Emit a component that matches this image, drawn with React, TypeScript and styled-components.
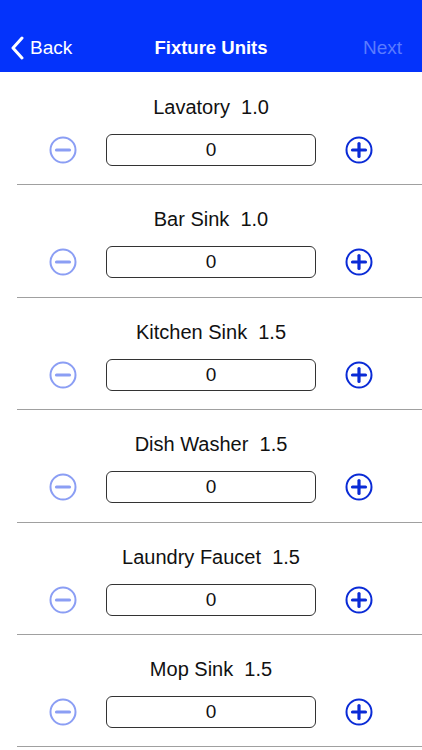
import React, { useState } from "react";
import styled, { createGlobalStyle } from "styled-components";

const GlobalStyle = createGlobalStyle`
  html, body {
    margin: 0;
    padding: 0;
    background: #ffffff;
    font-family: "Liberation Sans", Arial, sans-serif;
  }
`;

const Page = styled.div`
  width: 422px;
  height: 750px;
  overflow: hidden;
  background: #ffffff;
`;

const NavBar = styled.div`
  height: 72px;
  box-sizing: border-box;
  padding-top: 24px;
  background: #0433fb;
  display: grid;
  grid-template-columns: 1fr auto 1fr;
  align-items: center;
  color: #ffffff;
`;

const BackButton = styled.div`
  display: flex;
  align-items: center;
  gap: 6px;
  padding-left: 10px;
  font-size: 19px;
  height: 48px;
`;

const Title = styled.div`
  font-size: 18.5px;
  font-weight: bold;
`;

const NextButton = styled.div`
  justify-self: end;
  padding-right: 20px;
  font-size: 19px;
  color: #5a7bff;
`;

const List = styled.div`
  display: flex;
  flex-direction: column;
`;

const Row = styled.div`
  position: relative;
  height: 112.4px;
  box-sizing: border-box;
  padding-top: 24px;
  display: flex;
  flex-direction: column;
  align-items: center;

  &::after {
    content: "";
    position: absolute;
    left: 17px;
    right: 0;
    bottom: -1px;
    height: 1px;
    background: #a0a0a0;
  }
`;

const Label = styled.div`
  font-size: 20px;
  line-height: 22px;
  color: #111111;
  white-space: pre;
`;

const Controls = styled.div`
  margin-top: 16px;
  display: flex;
  align-items: center;
  gap: 29px;
`;

const RoundButton = styled.button`
  width: 28px;
  height: 28px;
  padding: 0;
  border: none;
  background: transparent;
  cursor: pointer;
  display: flex;
`;

const ValueBox = styled.div`
  width: 210px;
  height: 32px;
  box-sizing: border-box;
  border: 1.2px solid #333333;
  border-radius: 6px;
  display: flex;
  align-items: center;
  justify-content: center;
  font-size: 19px;
  color: #111111;
`;

const MinusIcon = ({ color }: { color: string }) => (
  <svg width="28" height="28" viewBox="0 0 28 28">
    <circle cx="14" cy="14" r="12.5" fill="none" stroke={color} strokeWidth="2" />
    <line x1="7.5" y1="14" x2="20.5" y2="14" stroke={color} strokeWidth="3.2" strokeLinecap="round" />
  </svg>
);

const PlusIcon = ({ color }: { color: string }) => (
  <svg width="28" height="28" viewBox="0 0 28 28">
    <circle cx="14" cy="14" r="12.5" fill="none" stroke={color} strokeWidth="2" />
    <line x1="7.5" y1="14" x2="20.5" y2="14" stroke={color} strokeWidth="3.2" strokeLinecap="round" />
    <line x1="14" y1="7.5" x2="14" y2="20.5" stroke={color} strokeWidth="3.2" strokeLinecap="round" />
  </svg>
);

const fixtures = [
  { name: "Lavatory", units: "1.0" },
  { name: "Bar Sink", units: "1.0" },
  { name: "Kitchen Sink", units: "1.5" },
  { name: "Dish Washer", units: "1.5" },
  { name: "Laundry Faucet", units: "1.5" },
  { name: "Mop Sink", units: "1.5" },
];

const FixtureRow = ({ name, units }: { name: string; units: string }) => {
  const [count, setCount] = useState(0);
  return (
    <Row>
      <Label>{`${name}  ${units}`}</Label>
      <Controls>
        <RoundButton onClick={() => setCount(Math.max(0, count - 1))}>
          <MinusIcon color={count > 0 ? "#0a2bd6" : "#8b9ef4"} />
        </RoundButton>
        <ValueBox>{count}</ValueBox>
        <RoundButton onClick={() => setCount(count + 1)}>
          <PlusIcon color="#0a2bd6" />
        </RoundButton>
      </Controls>
    </Row>
  );
};

export default function App() {
  return (
    <Page>
      <GlobalStyle />
      <NavBar>
        <BackButton>
          <svg width="14" height="24" viewBox="0 0 14 24">
            <path d="M12 2 L3 12 L12 22" fill="none" stroke="#ffffff" strokeWidth="3" strokeLinecap="round" strokeLinejoin="round" />
          </svg>
          Back
        </BackButton>
        <Title>Fixture Units</Title>
        <NextButton>Next</NextButton>
      </NavBar>
      <List>
        {fixtures.map((f) => (
          <FixtureRow key={f.name} name={f.name} units={f.units} />
        ))}
      </List>
    </Page>
  );
}
